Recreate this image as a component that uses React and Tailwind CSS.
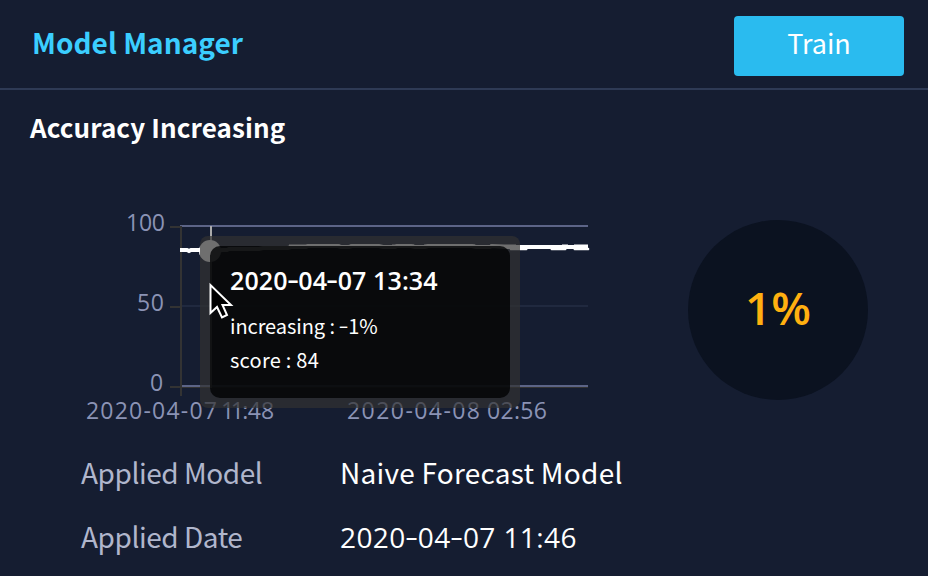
const digits = "font-['Open_Sans','Noto_Sans',sans-serif]";

function Header() {
  return (
    <header className="flex h-[90px] items-start justify-between border-b-2 border-[#2e3a55] pl-8 pr-6 pt-4">
      <h1 className="h-[52px] whitespace-nowrap text-[28px] font-bold leading-[52px] tracking-[0.05px] text-[#3bceff]">Model Manager</h1>
      <button className="h-[60px] w-[170px] rounded bg-[#2abbef] pb-1.5 text-[27px] leading-[54px] text-white">
        Train
      </button>
    </header>
  );
}

function Hyphen() {
  return <span className="relative -top-[0.04em] mx-[0.05em] inline-block scale-x-[1.45]">-</span>;
}

function Stamp({ date, time }) {
  const parts = date.split("-");
  return (
    <span className={digits}>
      {parts.map((part, i) => (
        <span key={i}>
          {i > 0 && <Hyphen />}
          {part}
        </span>
      ))}{" "}
      {time}
    </span>
  );
}

function AccuracyChart() {
  return (
    <svg
      className={`block h-[230px] w-[520px] ${digits}`}
      viewBox="80 200 520 230"
      fill="none"
    >
      <path d="M180 226H588" stroke="#5c6487" strokeWidth="2" />
      <path d="M180 306H588" stroke="#20293f" strokeWidth="2" />
      <path d="M180 387H588" stroke="#333333" strokeWidth="2" />
      <path d="M180 386H588" stroke="#5c6487" strokeWidth="2" />
      <path d="M181 226V396M170 227H180M170 307H180M170 387H180" stroke="#333333" strokeWidth="2" />
      <path d="M211 226V388" stroke="#aaaaaa" strokeWidth="2" />
      <path
        d="M180 250H187l2 1 2-1H212l6 1 4-1h5l2-1h30l4-1h25l3-1h15l2-1h30l3 1h8l3-1h27l4 1h12l2-1h14l4 1h10l3-1h44l4 1h14l2-1 12 1H588"
        stroke="white"
        strokeWidth="4"
      />
      <path
        d="M289 246H318M325 246H340M350 246H375M392 246H414M424 246H475M490 246H516M562 246h6M574 246h14"
        stroke="white"
        strokeWidth="3"
      />
      <path
        d="M511 249h4M517 249h9M552 249h8M562 249h3M575 249h13"
        stroke="white"
        strokeWidth="3"
        strokeLinecap="round"
        clipPath="inset(0)"
      />
      <circle cx="210" cy="251" r="11" fill="white" />
      <g fill="#8b93b5" fontSize="23">
        <text x="126" y="231" textLength="39">100</text>
        <text x="137" y="311" textLength="27">50</text>
        <text x="150" y="391" textLength="14">0</text>
        <text x="86" y="419" textLength="131">2020-04-07</text>
        <text x="221" y="419">
          1<tspan dx="-3.500">1</tspan><tspan dx="-1.500">:</tspan><tspan dx="-0.500">48</tspan>
        </text>
        <text x="347" y="419" textLength="133">2020-04-08</text>
        <text x="487" y="419" textLength="60">02:56</text>
      </g>
    </svg>
  );
}

function Tooltip() {
  return (
    <div className="absolute left-[120px] top-[36px] h-[172px] w-[320px] rounded-lg bg-[#323232]/70 p-[10px] text-white">
      <div className="h-[152px] rounded-[10px] bg-[#010204]/80 pl-5 pt-[15px]">
        <p className="whitespace-nowrap text-[25px] font-semibold leading-9 tracking-[0.1px]">
          <Stamp date="2020-04-07" time="13:34" />
        </p>
        <p className="mt-[11px] whitespace-nowrap text-[20px] leading-[34px] tracking-[-0.08px]">increasing : <Hyphen />1%</p>
        <p className="whitespace-nowrap text-[20px] leading-[34px] tracking-[0.25px]">score : 84</p>
      </div>
    </div>
  );
}

function Cursor() {
  return (
    <svg className="absolute left-[128px] top-[80px] h-[42px] w-[28px]" viewBox="208 280 28 42">
      <path d="M210.5 285V313L217 307L222 317.500L227 315L222.500 305H231Z" fill="black" stroke="white" strokeWidth="2" />
    </svg>
  );
}

function Detail({ label, children }) {
  return (
    <div className="flex h-16 items-center whitespace-nowrap text-[28px]">
      <dt className="w-[259px] tracking-[-0.45px] text-[#b0b6cc]">{label}</dt>
      <dd className="tracking-[0.25px] text-white">{children}</dd>
    </div>
  );
}

export default function App() {
  return (
    <main className="h-[576px] w-[928px] overflow-hidden bg-[#151d31] font-['Noto_Sans_CJK_KR',sans-serif]">
      <Header />
      <h2 className="h-[110px] whitespace-nowrap pl-[30px] pt-[17px] text-[26px] font-bold leading-10 tracking-[0.1px] text-white">
        Accuracy Increasing
      </h2>
      <section className="flex h-[240px] pl-20">
        <div className="relative h-[230px] w-[520px]">
          <AccuracyChart />
          <Tooltip />
          <Cursor />
        </div>
        <div className={`ml-[88px] mt-5 flex size-[180px] items-center justify-center rounded-full bg-[#0b1220] pb-[5px] text-[46px] font-semibold text-[#ffb010] ${digits}`}>
          1%
        </div>
      </section>
      <dl className="pl-[81px]">
        <Detail label="Applied Model">Naive Forecast Model</Detail>
        <Detail label="Applied Date">
          <span className="tracking-[0.4px]"><Stamp date="2020-04-07" time="11:46" /></span>
        </Detail>
      </dl>
    </main>
  );
}
